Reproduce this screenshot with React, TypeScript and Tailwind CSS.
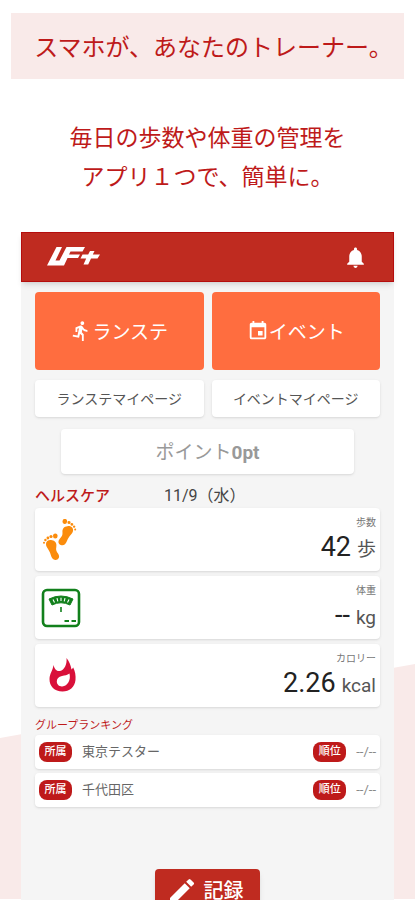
import React from 'react';
import { MdDirectionsRun, MdEdit, MdEvent, MdNotifications } from 'react-icons/md';

const Logo = () => (
  <svg width="54" height="20" viewBox="0 0 54 20" fill="#fff" role="img" aria-label="LF+">
    <path d="M9.5 0H15L8.5 13.5H12.5L19.5 0H38L35.5 4.5H23.5L22 7.5H33L31 11H20.5L17 18.5H0Z" />
    <path d="M43 4H47.5L45.8 7.5H53L50.5 11.5H44L41.2 17.5H36.5L39.2 11.5H33.5L35.5 7.5H41.2Z" />
  </svg>
);

const Foot = () => (
  <>
    <path d="M3 12C3 9 6 7.5 9 8.3C12.5 9 14 11.5 13.3 15C12.7 18 13.4 19.2 15 21.5C16.8 24 16.5 27 13.5 27.8C10.5 28.6 8.7 26.5 7.8 23C7 20 6 18.5 4.7 16.5C3.6 14.9 3 13.6 3 12Z" />
    <ellipse cx="12.3" cy="4" rx="2.3" ry="2.6" />
    <circle cx="8" cy="4.5" r="1.6" />
    <circle cx="4.9" cy="6" r="1.4" />
    <circle cx="2.4" cy="8" r="1.2" />
    <circle cx="1" cy="10.7" r="1" />
  </>
);

const StepsIcon = () => (
  <svg width="40" height="42" viewBox="0 0 40 42" fill="#fb8c0c" aria-hidden="true">
    <g transform="translate(2 13)">
      <Foot />
    </g>
    <g transform="translate(36.5 0) rotate(7) scale(-1 1)">
      <Foot />
    </g>
  </svg>
);

const ScaleIcon = () => (
  <svg width="40" height="40" viewBox="0 0 40 40" fill="none" stroke="#12801c" aria-hidden="true">
    <rect x="2" y="2" width="36" height="36" rx="4" strokeWidth="2.6" />
    <path d="M8 11Q20 5 32 11L29 17Q20 12.5 11 17Z" fill="#12801c" strokeWidth="1" />
    <path
      d="M12 11.5L13.5 14.5M16 10.2L16.8 13.3M20 9.7V13M24 10.2L23.2 13.3M28 11.5L26.5 14.5"
      stroke="#fff"
      strokeWidth="1.1"
    />
    <path d="M20 19V24" strokeWidth="1.6" />
    <path d="M23.5 33H28M30.5 33H35" strokeWidth="2" />
  </svg>
);

const FlameIcon = () => (
  <svg width="40" height="40" viewBox="0 0 40 40" fill="#d9103a" aria-hidden="true">
    <path
      fillRule="evenodd"
      d="M12.5 9C13.5 13 15.5 15.5 19 15C23.5 14.2 26.2 8 25.5 2C28.5 5.5 29.5 9 30.5 13.5C31.2 13 31.8 12.3 32.2 11.5C34.2 15.5 34.9 19.5 34.5 24C33.8 31 28.5 35.5 21.5 35.5C13.5 35.5 8.3 30 8.5 23C8.7 17.5 11.8 14.5 12.5 9ZM28.5 17.5C26 19.2 24 19.4 21 20C17.5 20.8 15.8 22.8 15.8 25.5C15.8 28.6 18.2 30.6 21.2 30.4C26.8 30 30 24 28.5 17.5Z"
    />
  </svg>
);

const HealthCard = ({
  icon,
  label,
  value,
  unit,
}: {
  icon: React.ReactNode;
  label: string;
  value: string;
  unit: string;
}) => (
  <div className="flex h-[63px] items-center justify-between rounded bg-white pl-1.5 pr-1 shadow-sm">
    {icon}
    <div className="flex flex-col items-end pt-0.5">
      <span className="text-[10px] leading-4 text-[#777]">{label}</span>
      <p className="flex items-baseline gap-1.5 text-[19px] leading-8 text-[#555]">
        <span className="text-[27px] text-[#222]">{value}</span>
        {unit}
      </p>
    </div>
  </div>
);

const Badge = ({ children }: { children: React.ReactNode }) => (
  <span className="flex h-5 w-[33px] items-center justify-center rounded-lg bg-[#be1a1a] text-[11px] font-medium text-white">
    {children}
  </span>
);

const RankingRow = ({ name }: { name: string }) => (
  <li className="flex h-[34px] items-center rounded bg-white px-1 text-[13px] text-[#666] shadow-sm">
    <Badge>所属</Badge>
    <span className="ml-2.5 flex-1">{name}</span>
    <Badge>順位</Badge>
    <span className="ml-2.5 text-[#888]">--/--</span>
  </li>
);

const App = () => {
  return (
    <main className="relative flex h-screen flex-col overflow-hidden bg-white font-['Roboto','Noto_Sans_CJK_JP',sans-serif]">
      <div className="absolute inset-x-0 bottom-px top-[664px] bg-[#f9eae9] [clip-path:polygon(0_74px,100%_0,100%_100%,0_100%)]" />

      <h1 className="mx-[11px] mt-[13px] flex h-[66px] shrink-0 items-center justify-center whitespace-nowrap bg-[#f9eae9] pl-3 pt-1 text-2xl font-normal text-[#be1a1a]">
        スマホが、あなたのトレーナー。
      </h1>
      <p className="mt-10 shrink-0 text-center text-[23px] leading-[39px] text-[#be1a1a]">
        毎日の歩数や体重の管理を
        <br />
        アプリ１つで、簡単に。
      </p>

      <section className="relative mx-[21px] mt-[35px] flex-1 bg-[#f5f5f5]">
        <header className="flex h-[50px] items-center justify-between border border-[#b50d0d] bg-[#bf2b20] px-[25px] shadow-md">
          <Logo />
          <button type="button" aria-label="お知らせ" className="text-white">
            <MdNotifications size={25} />
          </button>
        </header>

        <div className="px-3.5 pt-2.5">
          <div className="grid grid-cols-2 gap-x-2 gap-y-2.5">
            <button
              type="button"
              className="flex h-[78px] items-center justify-center rounded bg-[#ff6d3f] text-[19px] text-white"
            >
              <MdDirectionsRun size={22} />
              <span className="pt-1">ランステ</span>
            </button>
            <button
              type="button"
              className="flex h-[78px] items-center justify-center rounded bg-[#ff6d3f] text-[19px] text-white"
            >
              <MdEvent size={22} />
              <span className="pt-1">イベント</span>
            </button>
            <button type="button" className="h-[37px] rounded bg-white text-sm text-[#555] shadow-sm">
              ランステマイページ
            </button>
            <button type="button" className="h-[37px] rounded bg-white text-sm text-[#555] shadow-sm">
              イベントマイページ
            </button>
          </div>

          <button
            type="button"
            className="mx-auto mt-3 block h-[45px] w-[85%] rounded bg-white pt-1 text-[19px] text-[#999] shadow-sm"
          >
            ポイント<span className="font-bold">0pt</span>
          </button>

          <div className="mt-2.5 flex h-6 items-center">
            <h2 className="text-[15px] font-medium text-[#be1a1a]">ヘルスケア</h2>
            <time className="ml-[54px] text-base text-[#444]">11/9（水）</time>
          </div>
          <div className="flex flex-col gap-[5px]">
            <HealthCard icon={<StepsIcon />} label="歩数" value="42" unit="歩" />
            <HealthCard icon={<ScaleIcon />} label="体重" value="--" unit="kg" />
            <HealthCard icon={<FlameIcon />} label="カロリー" value="2.26" unit="kcal" />
          </div>

          <h2 className="mt-2.5 text-[11px] leading-[18px] text-[#be1a1a]">グループランキング</h2>
          <ul className="flex flex-col gap-1">
            <RankingRow name="東京テスター" />
            <RankingRow name="千代田区" />
          </ul>

          <button
            type="button"
            className="mx-auto mt-[62px] flex h-11 w-[105px] items-center justify-center gap-1.5 rounded bg-[#bf2b20] pr-1.5 text-xl font-medium text-white shadow-md"
          >
            <MdEdit size={32} />
            記録
          </button>
        </div>
      </section>
    </main>
  );
};

export default App;
